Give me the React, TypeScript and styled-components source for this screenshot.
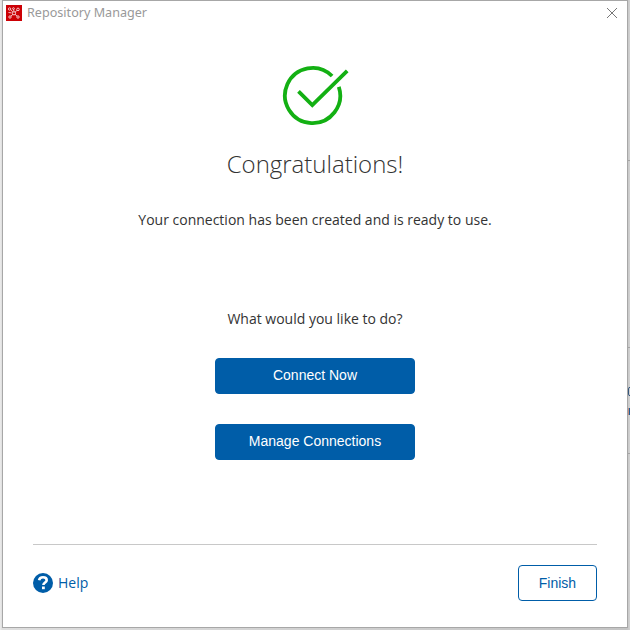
import React from 'react';
import styled, { createGlobalStyle } from 'styled-components';

const GlobalStyle = createGlobalStyle`
  *, *::before, *::after { box-sizing: border-box; }
  body { margin: 0; background: #d2d2d2; overflow: hidden; }
`;

const Desktop = styled.div`
  width: 630px;
  height: 630px;
  padding: 0 2px 2px;
  display: grid;
  grid-template-columns: 626px;
  position: relative;
  overflow: hidden;
  background: linear-gradient(90deg, #ececec 0, #dedede 2px, #c4c4c4 627px, #d2d2d2 630px);
  font-family: 'Open Sans', 'Noto Sans', sans-serif;
  color: #333;
`;

const Dialog = styled.section`
  height: 628px;
  border: 1px solid #a7a7a7;
  background: #fff;
  display: flex;
  flex-direction: column;
`;

const TitleBar = styled.header`
  height: 24px;
  display: flex;
  align-items: center;
  padding: 0 9px 0 3px;
`;

const Title = styled.span`
  font: 12.6px/18px 'Noto Sans', sans-serif;
  color: #999;
  margin-left: 5px;
  flex: 1;
`;

const CloseButton = styled.button`
  width: 12px;
  height: 12px;
  padding: 0;
  border: 0;
  background: none;
  display: flex;
`;

const Content = styled.main`
  display: flex;
  flex-direction: column;
  align-items: center;
  height: 519px;
  padding-top: 35px;
`;

const SuccessIcon = styled.svg`
  width: 70px;
  height: 70px;
  margin-left: 2px;
`;

const Heading = styled.h1`
  margin: 16px 0 0;
  font-size: 24px;
  font-weight: 300;
  line-height: 36px;
`;

const Message = styled.p<{ $gap: number }>`
  margin: ${({ $gap }) => $gap}px 0 0;
  font-size: 14px;
  line-height: 20px;
`;

const Actions = styled.div`
  display: grid;
  gap: 30px;
  margin-top: 29px;
`;

const Button = styled.button<{ $outline?: boolean }>`
  width: ${({ $outline }) => ($outline ? 79 : 200)}px;
  height: 36px;
  padding: 0 0 ${({ $outline }) => ($outline ? 0 : 2)}px;
  border: 1px solid #005da8;
  border-radius: 4px;
  background: ${({ $outline }) => ($outline ? '#fff' : '#005da8')};
  color: ${({ $outline }) => ($outline ? '#005da8' : '#fff')};
  font: 14px/20px 'Liberation Sans', Arial, sans-serif;
`;

const Footer = styled.footer`
  margin: 0 30px;
  padding-top: 20px;
  border-top: 1px solid #c8c8c8;
  display: flex;
  justify-content: space-between;
  align-items: center;
`;

const HelpLink = styled.a`
  display: flex;
  align-items: center;
  gap: 5px;
  color: #005da8;
  font-size: 14px;
  line-height: 20px;
`;

const BackgroundRule = styled.i<{ $top: number }>`
  position: absolute;
  left: 628px;
  top: ${({ $top }) => $top}px;
  width: 2px;
  height: 1px;
  background: #a5a5a5;
`;

const BackgroundMarks = styled.svg`
  position: absolute;
  left: 627px;
  top: 384px;
`;

const AppIcon = () => (
  <svg width="16" height="16" viewBox="0 0 16 16">
    <path fill="#cc0005" d="M0 0h16v16H0z" />
    <g fill="none" stroke="#fff" strokeWidth=".9" opacity=".85">
      <circle cx="8" cy="8.3" r="1.6" />
      <circle cx="3.6" cy="4" r="1.2" />
      <circle cx="7.5" cy="3.6" r=".9" />
      <circle cx="12" cy="4.4" r="1.3" />
      <circle cx="4" cy="12" r="1.2" />
      <circle cx="12" cy="12" r="1.2" />
      <path d="M4.8 5l2 1.8M11 5.4l-2 1.8M5 11l2-1.7M11 11L9 9.3M7.6 4.5L8 6.5M2.5 7.5l3 .4" />
    </g>
  </svg>
);

export default function App() {
  return (
    <>
      <GlobalStyle />
      <Desktop>
        <Dialog role="dialog" aria-label="Repository Manager">
          <TitleBar>
            <AppIcon />
            <Title>Repository Manager</Title>
            <CloseButton aria-label="Close">
              <svg width="12" height="12" viewBox="0 0 12 12">
                <path d="M1 1l10 10M11 1L1 11" stroke="#777" fill="none" />
              </svg>
            </CloseButton>
          </TitleBar>
          <Content>
            <SuccessIcon viewBox="0 0 70 70">
              <g fill="none" stroke="#13b013" strokeWidth="3.8">
                <path d="M51.1 16A27.6 27.6 0 1 0 57.8 26.9" />
                <path d="M17.5 31.3L31.3 45.1 66.2 10.9" />
              </g>
            </SuccessIcon>
            <Heading>Congratulations!</Heading>
            <Message $gap={28}>Your connection has been created and is ready to use.</Message>
            <Message $gap={79}>What would you like to do?</Message>
            <Actions>
              <Button>Connect Now</Button>
              <Button>Manage Connections</Button>
            </Actions>
          </Content>
          <Footer>
            <HelpLink>
              <svg width="20" height="20" viewBox="0 0 20 20">
                <circle cx="10" cy="10" r="10" fill="#005da8" />
                <path d="M6.1 7.3C6.5 5.2 8 4.3 10 4.3c2.2 0 3.7 1.1 3.7 2.9 0 2.2-3.3 2.3-3.3 4.8" fill="none" stroke="#fff" strokeWidth="2.6" />
                <path d="M9 13.5h2.8v2.7H9z" fill="#fff" />
              </svg>
              Help
            </HelpLink>
            <Button $outline>Finish</Button>
          </Footer>
        </Dialog>
        <BackgroundRule $top={160} />
        <BackgroundRule $top={347} />
        <BackgroundRule $top={453} />
        <BackgroundMarks width="3" height="34" viewBox="0 0 3 34">
          <path d="M3 3.5H2L1.500 5v5l.5 1.500h1" fill="none" stroke="#35567c" />
          <path d="M1 24h1v7H1z" fill="#c58b7d" />
          <path d="M2 24h1v7H2z" fill="#205f99" />
        </BackgroundMarks>
      </Desktop>
    </>
  );
}
